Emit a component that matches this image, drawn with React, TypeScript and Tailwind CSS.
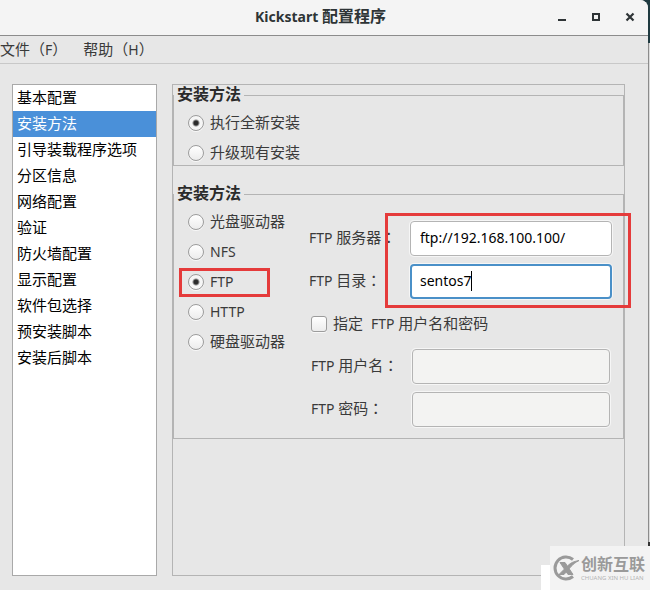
import { useState } from "react";
import type { ReactNode } from "react";

const SECTIONS = [
  "基本配置",
  "安装方法",
  "引导装载程序选项",
  "分区信息",
  "网络配置",
  "验证",
  "防火墙配置",
  "显示配置",
  "软件包选择",
  "预安装脚本",
  "安装后脚本",
];

const INSTALL_MODES = ["执行全新安装", "升级现有安装"];
const SOURCES = ["光盘驱动器", "NFS", "FTP", "HTTP", "硬盘驱动器"];

function Latin({ children }: { children: ReactNode }) {
  return <span className="text-sm/6">{children}</span>;
}

function Colon() {
  return <span className="font-['Noto_Sans_CJK_TC',sans-serif]">：</span>;
}

type RadioProps = {
  name: string;
  label: string;
  checked: boolean;
  onChange: () => void;
};

function Radio({ name, label, checked, onChange }: RadioProps) {
  const latin = /^[A-Z]+$/.test(label);
  return (
    <label className="flex h-6 items-center gap-[6px] whitespace-nowrap">
      <input
        type="radio"
        name={name}
        checked={checked}
        onChange={onChange}
        className="size-4 shrink-0 appearance-none rounded-full border border-[#9c9c9c] bg-linear-to-b from-white to-[#ececec] shadow-[0_1px_0_#f8f8f8] checked:bg-[radial-gradient(circle,#2b2b2b_0_2px,#f6f6f6_4px)]"
      />
      {latin ? <Latin>{label}</Latin> : <span className="pb-[2px]">{label}</span>}
    </label>
  );
}

function Group({ title, children }: { title: string; children: ReactNode }) {
  return (
    <fieldset className="border border-[#b4b4b4]">
      <legend className="h-5 px-[3px] text-base/[18px] font-bold text-[#2b2b2b]">{title}</legend>
      {children}
    </fieldset>
  );
}

const INPUT =
  "h-[35px] w-full min-w-0 rounded-[4px] border px-[9px] pb-[2px] text-sm text-black outline-none shadow-[0_0_0_1px_#f6f6f6]";

export default function App() {
  const [section, setSection] = useState("安装方法");
  const [mode, setMode] = useState(INSTALL_MODES[0]);
  const [source, setSource] = useState("FTP");
  const [server, setServer] = useState("ftp://192.168.100.100/");
  const [directory, setDirectory] = useState("sentos7");
  const [useLogin, setUseLogin] = useState(false);

  return (
    <div className="relative flex h-screen min-h-[480px] overflow-hidden bg-[#1f3a40] font-['Noto_Sans','Noto_Sans_CJK_SC',sans-serif] text-[15px]/6 text-[#3a3a3a]">
      <div className="flex min-w-0 flex-1 flex-col overflow-hidden rounded-tr-lg bg-[#e7e7e7]">
        <header className="flex h-9 shrink-0 items-center border-b border-[#8c8c8c] bg-[#f4f4f4] pr-px">
          <div className="flex-1" />
          <h1 className="pr-[6px] pb-[2px] text-base/6 font-bold text-[#2e3436]">
            <span className="text-sm/6">Kickstart </span>配置程序
          </h1>
          <div className="flex flex-1 justify-end text-[#2e3436]">
            <button aria-label="最小化" className="flex h-8 w-[34px] items-center justify-center">
              <svg className="size-4" viewBox="0 0 16 16">
                <path d="M4 10h8" stroke="currentColor" strokeWidth="2" />
              </svg>
            </button>
            <button aria-label="最大化" className="flex h-8 w-[34px] items-center justify-center">
              <svg className="size-4" viewBox="0 0 16 16">
                <rect x="5" y="4" width="6" height="6" fill="none" stroke="currentColor" strokeWidth="2" />
              </svg>
            </button>
            <button aria-label="关闭" className="flex h-8 w-[34px] items-center justify-center">
              <svg className="size-4" viewBox="0 0 16 16">
                <path d="M4.500 3.500l7 7M11.500 3.500l-7 7" stroke="currentColor" strokeWidth="2.200" />
              </svg>
            </button>
          </div>
        </header>

        <nav className="flex h-7 shrink-0 items-center gap-4 border-b border-[#c8c8c8]">
          <button className="whitespace-nowrap">文件（<Latin>F</Latin>）</button>
          <button className="whitespace-nowrap">帮助（<Latin>H</Latin>）</button>
        </nav>

        <main className="flex min-h-0 flex-1 gap-[15px] pt-5 pr-[23px] pb-[14px] pl-3">
          <ul className="w-[145px] shrink-0 border border-[#a9a9a9] bg-white text-black">
            {SECTIONS.map((name) => (
              <li key={name}>
                <button
                  onClick={() => setSection(name)}
                  className={
                    name === section
                      ? "block h-[26px] w-full bg-[#4a90d9] px-1 pb-[2px] text-left text-white"
                      : "block h-[26px] w-full px-1 pb-[2px] text-left"
                  }
                >
                  {name}
                </button>
              </li>
            ))}
          </ul>

          <div className="min-w-0 flex-1 border border-[#b4b4b4]">
            <Group title="安装方法">
              <div className="flex flex-col gap-[6px] pt-[6px] pl-[14px]">
                {INSTALL_MODES.map((name) => (
                  <Radio key={name} name="mode" label={name} checked={mode === name} onChange={() => setMode(name)} />
                ))}
              </div>
            </Group>

            <div className="mt-[18px]">
              <Group title="安装方法">
                <div className="flex pt-[6px] pr-[11px] pb-[11px] pl-[14px]">
                  <div className="flex w-[121px] shrink-0 flex-col gap-[6px]">
                    {SOURCES.map((name) => (
                      <div key={name} className="relative">
                        <Radio name="source" label={name} checked={source === name} onChange={() => setSource(name)} />
                        {name === "FTP" && (
                          <span className="pointer-events-none absolute -inset-x-[9px] -top-[2px] -bottom-[3px] w-[91px] border-3 border-[#e53b3b]" />
                        )}
                      </div>
                    ))}
                  </div>

                  <div className="min-w-0 flex-1 pt-[11px]">
                    <div className="relative grid grid-cols-[101px_minmax(0,1fr)] items-center gap-y-2">
                      <label htmlFor="server" className="pb-[2px] whitespace-nowrap">
                        <Latin>FTP </Latin>服务器<Colon />
                      </label>
                      <input
                        id="server"
                        value={server}
                        onChange={(e) => setServer(e.target.value)}
                        className={`${INPUT} border-[#b4b4b4] bg-white`}
                      />
                      <label htmlFor="directory" className="pb-[2px] whitespace-nowrap">
                        <Latin>FTP </Latin>目录<Colon />
                      </label>
                      <div className="relative">
                        <input
                          id="directory"
                          value={directory}
                          onChange={(e) => setDirectory(e.target.value)}
                          className="block h-[35px] w-full min-w-0 rounded-[4px] border-2 border-[#4a90c8] bg-white px-2 pb-[2px] text-sm text-black outline-none shadow-[0_0_0_1px_#f6f6f6]"
                        />
                        <span className="absolute top-[7px] left-[61px] h-5 w-px bg-black" />
                      </div>
                      <span className="pointer-events-none absolute -top-2 -right-[19px] -bottom-[9px] left-[76px] z-10 border-3 border-[#e53b3b]" />
                    </div>

                    <div className="px-[2px]">
                      <label className="flex h-[50px] items-center gap-[6px] whitespace-nowrap">
                        <input
                          type="checkbox"
                          checked={useLogin}
                          onChange={(e) => setUseLogin(e.target.checked)}
                          className="size-4 shrink-0 appearance-none rounded-[3px] border border-[#9c9c9c] bg-linear-to-b from-white to-[#ececec] shadow-[0_1px_0_#f8f8f8] checked:bg-[#4a90d9]"
                        />
                        <span className="flex gap-2 pb-[2px]">
                          <span>指定</span>
                          <span>
                            <Latin>FTP </Latin>用户名和密码
                          </span>
                        </span>
                      </label>
                      <div className="grid grid-cols-[101px_minmax(0,1fr)] items-center gap-y-2">
                        <label htmlFor="user" className="pb-[2px] whitespace-nowrap">
                          <Latin>FTP </Latin>用户名<Colon />
                        </label>
                        <input id="user" disabled={!useLogin} className={`${INPUT} border-[#b4b4b4] bg-[#f3f3f2]`} />
                        <label htmlFor="password" className="pb-[2px] whitespace-nowrap">
                          <Latin>FTP </Latin>密码<Colon />
                        </label>
                        <input
                          id="password"
                          type="password"
                          disabled={!useLogin}
                          className={`${INPUT} border-[#b4b4b4] bg-[#f3f3f2]`}
                        />
                      </div>
                    </div>
                  </div>
                </div>
              </Group>
            </div>
          </div>
        </main>
      </div>

      <div className="flex w-[2px] shrink-0 flex-col">
        <div className="h-[43px]" />
        <div className="flex-1 border-l border-[#8c8c8c] bg-[#dcdcdc]" />
        <div className="h-12 bg-[#333333]" />
      </div>

      <div className="absolute right-0 bottom-0 h-[25px] w-[109px] bg-white" />
      <div className="absolute right-0 bottom-0 flex h-11 w-[100px] items-center gap-px bg-[#f3f3f3] pl-[2px] text-[#9a9a9a]">
        <svg className="size-7 shrink-0" viewBox="0 0 28 28" fill="none" stroke="currentColor">
          <path d="M21 5.500A11 11 0 1 0 21 22.500" strokeWidth="3" />
          <path d="M8 8.500h5l8 12h-5z" fill="currentColor" strokeWidth="1" />
          <path d="M7 20.500l9-9c3-3 6-4 11-5-4 2-6 4-8 6l-7 8z" fill="currentColor" strokeWidth="1" />
        </svg>
        <div className="flex flex-col whitespace-nowrap">
          <span className="text-base/5 font-bold">创新互联</span>
          <span className="text-[6px]/[8px] text-[#b4b4b4]">CHUANG XIN HU LIAN</span>
        </div>
      </div>
    </div>
  );
}
